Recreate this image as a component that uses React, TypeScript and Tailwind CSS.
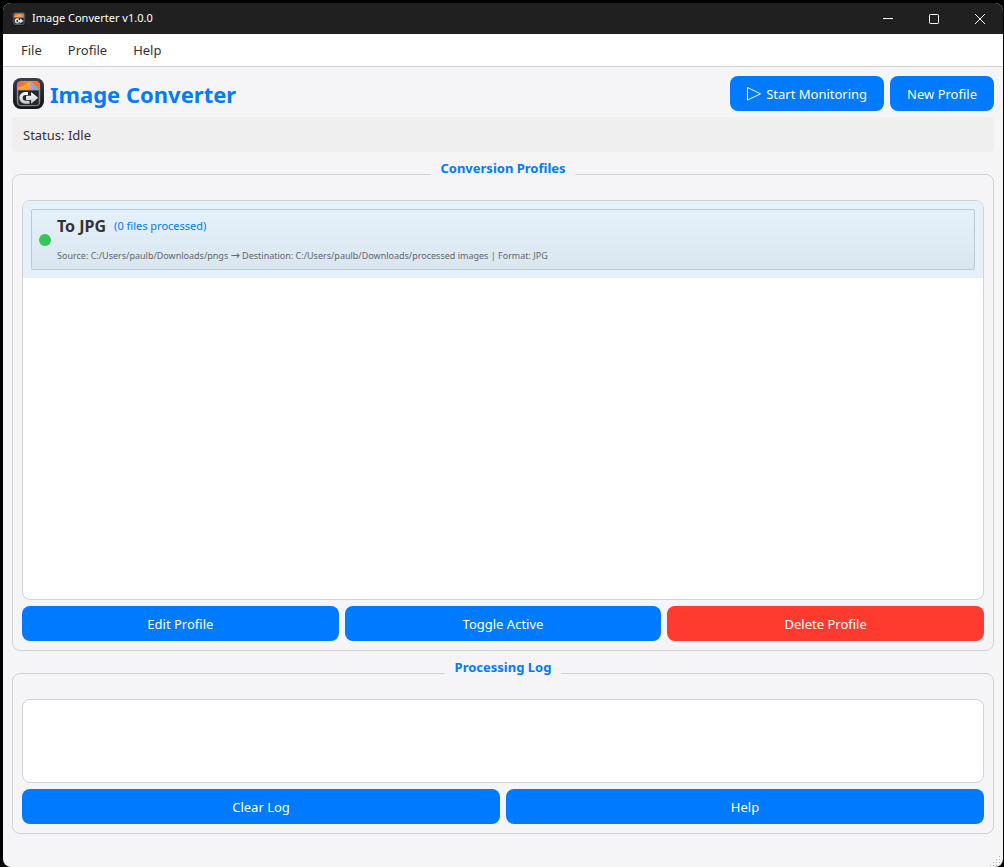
import type { ReactNode } from "react";

const BUTTON = "h-[35px] rounded-lg px-[17px] pt-0.5 text-[13px] text-white";

function AppIcon({ className }: { className: string }) {
  return (
    <svg viewBox="0 0 32 32" className={className} aria-hidden="true">
      <defs>
        <linearGradient id="photo" x1="0" y1="0.2" x2="1" y2="0">
          <stop offset="0" stopColor="#f4606c" />
          <stop offset="0.3" stopColor="#ff7a1c" />
          <stop offset="0.65" stopColor="#ffb01c" />
          <stop offset="1" stopColor="#ff6a28" />
        </linearGradient>
        <linearGradient id="frame" x1="0" y1="0" x2="0" y2="1">
          <stop offset="0" stopColor="#3a3d47" />
          <stop offset="0.5" stopColor="#23262e" />
          <stop offset="1" stopColor="#14161d" />
        </linearGradient>
        <linearGradient id="metal" x1="0" y1="0" x2="0" y2="1">
          <stop offset="0" stopColor="#ffffff" />
          <stop offset="1" stopColor="#c4c7cb" />
        </linearGradient>
      </defs>
      <rect x="0" y="0" width="32" height="32" rx="8" fill="url(#frame)" />
      <rect x="4.500" y="3.500" width="23" height="25" rx="3.500" fill="#30333b" stroke="#a9adb5" strokeWidth="1" />
      <rect x="5" y="4" width="22" height="10" rx="2" fill="url(#photo)" />
      <path d="M5 9.500c5-1 9-2.500 12-4.500l5 6-3 2H5z" fill="#ffb52a" opacity="0.8" />
      <path d="M18 4l9 8.500h-6z" fill="#62b7f4" />
      <path d="M18 4l3 8.500h-4z" fill="#d987d8" />
      <path d="M19 4h6a2 2 0 0 1 2 2v5.500z" fill="#f2703a" />
      <path d="M5 12.500h22v13a3 3 0 0 1-3 3H8a3 3 0 0 1-3-3z" fill="#24272d" stroke="#8b8f95" strokeWidth="0.8" />
      <path
        d="M15.500 14.500h-3a6 6 0 0 0 0 12h4.500v-3h-4a3 3 0 0 1 0-6h2.500zM13.500 18.300h5.200v-3.800l7.300 6-7.300 6v-3.800h-5.200z"
        fill="url(#metal)"
      />
    </svg>
  );
}

function Group({ title, className, children }: { title: string; className: string; children: ReactNode }) {
  return (
    <section
      aria-label={title}
      className={`relative flex flex-col gap-1.5 rounded-lg border border-[#d1d1d6] px-[9px] pt-[25px] pb-[9px] ${className}`}
    >
      <h2 className="absolute -top-[17px] left-1/2 -translate-x-1/2 bg-[#f5f5f7] px-2.5 text-[13px] leading-5 font-bold whitespace-nowrap text-[#007aff]">
        {title}
      </h2>
      {children}
    </section>
  );
}

export default function App() {
  return (
    <div className="relative flex min-h-screen flex-col bg-black pt-[3px] pr-px pl-[3px] font-['Noto_Sans','Open_Sans',sans-serif] text-[#333]">
      <div className="flex flex-1 flex-col overflow-hidden rounded-lg bg-[#f5f5f7]">
        <header className="flex h-[31px] items-center bg-[#202020] text-white">
          <AppIcon className="ml-[9px] size-[14px]" />
          <span className="ml-1.5 flex-1 text-[11px]">Image Converter v1.0.0</span>
          <button aria-label="Minimize" className="flex h-full w-[46px] items-center justify-center">
            <svg viewBox="0 0 10 10" className="size-2.5" stroke="currentColor"><path d="M0 4.500h10" /></svg>
          </button>
          <button aria-label="Maximize" className="flex h-full w-[46px] items-center justify-center">
            <svg viewBox="0 0 10 10" className="size-2.5" stroke="currentColor" fill="none"><rect x="0.5" y="0.5" width="9" height="9" rx="0.8" /></svg>
          </button>
          <button aria-label="Close" className="flex h-full w-[46px] items-center justify-center">
            <svg viewBox="0 0 10 10" className="size-2.5" stroke="currentColor"><path d="M0 0l10 10M10 0L0 10" /></svg>
          </button>
        </header>

        <nav className="flex h-[33px] items-center border-b border-[#d1d1d6] bg-white px-[5px] pt-0.5 text-[13px]">
          <button className="px-[13px]">File</button>
          <button className="px-[13px]">Profile</button>
          <button className="px-[13px]">Help</button>
        </nav>

        <main className="flex flex-1 flex-col px-[9px] pt-[9px] pb-[33px]">
          <div className="flex items-center gap-1.5">
            <div className="flex flex-1 items-center gap-1.5 pl-px">
              <AppIcon className="size-[31px]" />
              <h1 className="text-[22px] leading-8 font-bold text-[#007aff]">Image Converter</h1>
            </div>
            <button className={`${BUTTON} flex items-center gap-1 bg-[#007aff]`}>
              <svg viewBox="0 0 15 15" className="size-[15px]" fill="none" stroke="currentColor" strokeLinejoin="round" aria-hidden="true">
                <path d="M0.500 0.500v12.600L13.500 6.800z" />
              </svg>
              Start Monitoring
            </button>
            <button className={`${BUTTON} bg-[#007aff]`}>New Profile</button>
          </div>

          <p role="status" className="mt-1.5 flex h-[35px] items-center rounded bg-[#efeff0] px-[11px] pt-0.5 text-[13px]">Status: Idle</p>

          <Group title="Conversion Profiles" className="mt-[22px] flex-1">
            <ul className="flex-1 overflow-hidden rounded-lg border border-[#d1d1d6] bg-white">
              <li className="bg-[#e4f1fb] p-2">
                <div className="flex h-[61px] items-center gap-1.5 rounded-xs border border-[#bdcad4] bg-linear-to-b from-[#e4f1fb] to-[#dae6ef] px-[7px]">
                  <span role="img" aria-label="Active" className="size-3 shrink-0 rounded-full bg-[#34c759]" />
                  <div className="flex flex-col gap-3">
                    <div className="flex items-center gap-2">
                      <span className="text-base leading-5 font-bold">To JPG</span>
                      <span className="text-[11px] leading-5 text-[#007aff]">(0 files processed)</span>
                    </div>
                    <p className="text-[9px] leading-4 text-[#666]">
                      Source: C:/Users/paulb/Downloads/pngs <span className="font-['DejaVu_Sans',sans-serif] text-[11px] leading-none">→</span> Destination: C:/Users/paulb/Downloads/processed images | Format: JPG
                    </p>
                  </div>
                </div>
              </li>
            </ul>
            <div className="grid grid-cols-3 gap-1.5">
              <button className={`${BUTTON} bg-[#007aff]`}>Edit Profile</button>
              <button className={`${BUTTON} bg-[#007aff]`}>Toggle Active</button>
              <button className={`${BUTTON} bg-[#ff3b30]`}>Delete Profile</button>
            </div>
          </Group>

          <Group title="Processing Log" className="mt-[22px]">
            <textarea
              aria-label="Processing Log"
              readOnly
              className="block h-[84px] w-full resize-none rounded-lg border border-[#d1d1d6] bg-white p-2 text-[13px] outline-none"
            />
            <div className="grid grid-cols-2 gap-1.5">
              <button className={`${BUTTON} bg-[#007aff]`}>Clear Log</button>
              <button className={`${BUTTON} bg-[#007aff]`}>Help</button>
            </div>
          </Group>
        </main>
      </div>

      <svg viewBox="0 0 12 12" className="absolute right-0.5 bottom-0 size-3" fill="#b8b8bc" aria-hidden="true">
        <path d="M9 1h1v1H9zM6 4h1v1H6zM9 4h1v1H9zM3 7h1v1H3zM6 7h1v1H6zM9 7h1v1H9zM0 10h1v1H0zM3 10h1v1H3zM6 10h1v1H6z" />
      </svg>
    </div>
  );
}
